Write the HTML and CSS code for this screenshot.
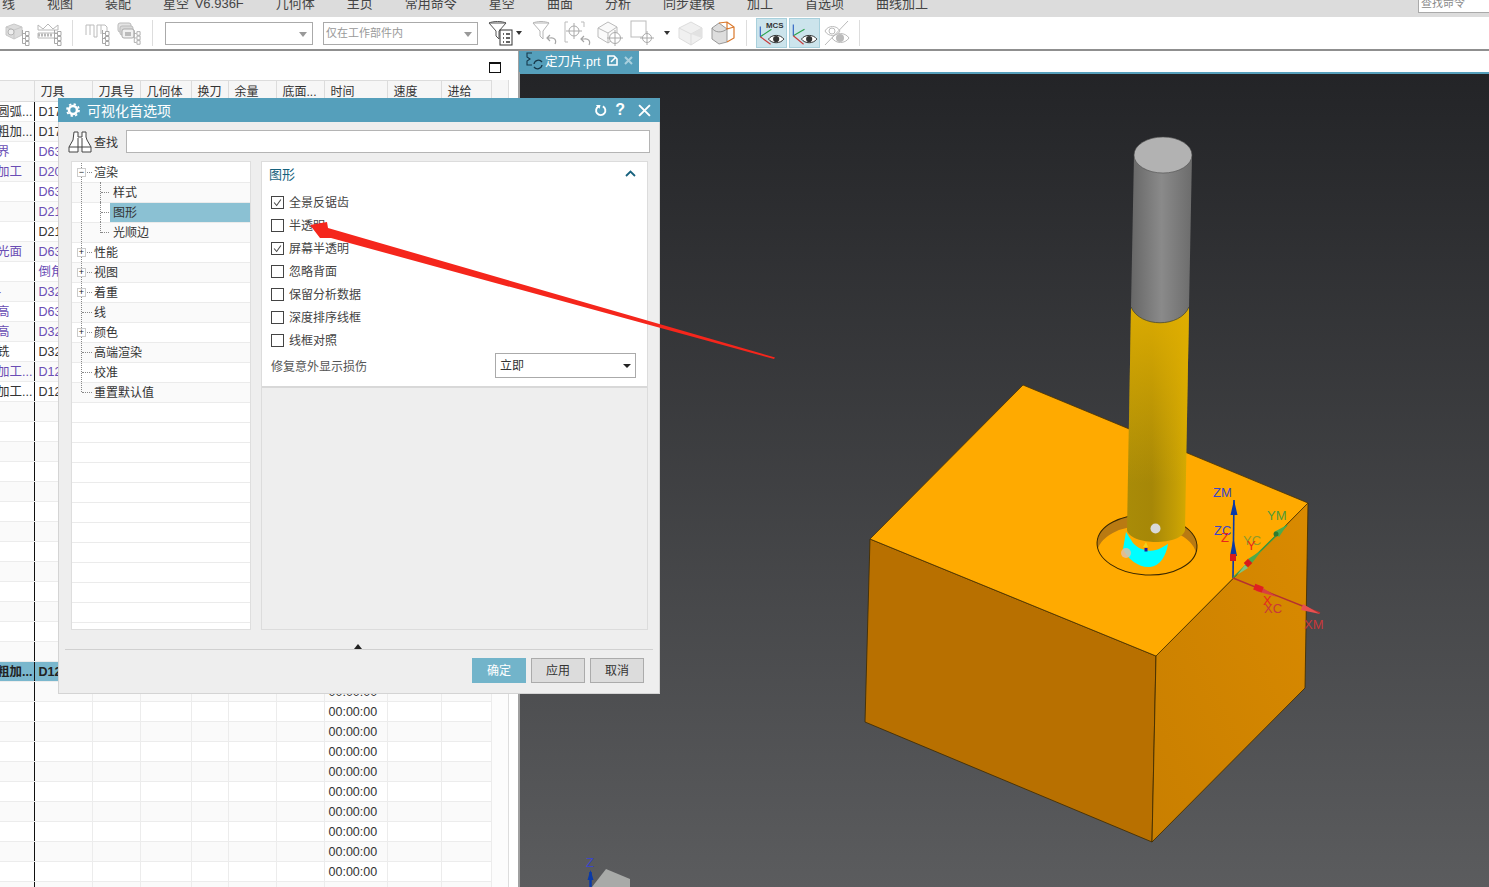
FILE: index.html
```html
<!DOCTYPE html>
<html lang="zh-CN">
<head>
    <meta charset="UTF-8">
    <title>可视化首选项</title>
    <link rel="stylesheet" href="styles.css">
</head>
<body>
    <svg class="defs" width="0" height="0">
        <symbol id="branch" viewBox="0 0 10 16">
            <path d="M2.5 0V13.5M2.5 3.5H5M2.5 8.5H5M2.5 13.5H5" fill="none" stroke="#a8a8a8"/>
            <path d="M5.5 1.5h3.5v4h-3.5zM5.5 6.5h3.5v4h-3.5zM5.5 11.5h3.5v4h-3.5z" fill="#fff" stroke="#a8a8a8"/>
        </symbol>
        <symbol id="eye" viewBox="0 0 24 14">
            <path d="M1 7C6 0 18 0 23 7C18 14 6 14 1 7Z" fill="#fff" stroke="#333" stroke-width="1.4"/>
            <circle cx="12" cy="7" r="4.4" fill="#333"/>
        </symbol>
    </svg>

    <div class="menubar">
        <span>线</span><span>视图</span><span>装配</span><span>星空 V6.936F</span><span>几何体</span><span>主页</span><span>常用命令</span><span>星空</span><span>曲面</span><span>分析</span><span>同步建模</span><span>加工</span><span>首选项</span><span>曲线加工</span>
        <div class="cmd-search">查找命令</div>
    </div>

    <div class="toolbar">
        <svg class="tool" viewBox="0 0 25 26"><path d="M1 7l8-3 8 3v8l-8 4-8-4z" fill="#dcdcdc" stroke="#c8c8c8"/><path d="M1 7l8 3 8-3M9 10v9" fill="none" stroke="#c8c8c8"/><circle cx="6" cy="12" r="3" fill="#eee" stroke="#b5b5b5"/><use href="#branch" x="15" y="10" width="10" height="16"/></svg>
        <svg class="tool" viewBox="0 0 25 26"><path d="M1 5l5 4 5-5 5 5 5-4v5H1zM1 13h20M1 13v5h20v-5" fill="none" stroke="#b8b8b8"/><path d="M1 15h14" stroke="#b8b8b8" stroke-dasharray="2 1" stroke-width="3"/><use href="#branch" x="15" y="10" width="10" height="16"/></svg>
        <i class="sep sep-a"></i>
        <svg class="tool tool-c" viewBox="0 0 25 26"><path d="M1 15V5h4v10M5 5h4v12h3V5h4v9M16 5h4l2 2v8l-3 3" fill="none" stroke="#bcbcbc"/><use href="#branch" x="15" y="10" width="10" height="16"/></svg>
        <svg class="tool tool-d" viewBox="0 0 25 26"><rect x="2" y="3" width="13" height="9" rx="2" fill="#e4e4e4" stroke="#bbb"/><rect x="4" y="6" width="13" height="9" rx="2" fill="#d8d8d8" stroke="#bbb"/><rect x="6" y="9" width="12" height="9" rx="2" fill="#f0f0f0" stroke="#aaa"/><rect x="9" y="12" width="6" height="4" fill="#bbb"/><use href="#branch" x="16" y="10" width="9" height="15"/></svg>
        <i class="sep sep-b"></i>
        <div class="combo combo-a"><i class="caret"></i></div>
        <div class="combo combo-b">仅在工作部件内<i class="caret"></i></div>
        <svg class="tool tool-f" viewBox="0 0 25 26"><path d="M1 3h17l-7 8v8l-3-3v-5z" fill="#fff" stroke="#555"/><path d="M1 3c4-2 13-2 17 0" fill="none" stroke="#555"/><rect x="12" y="10" width="12" height="15" fill="#fff" stroke="#333"/><path d="M15 14h1M15 18h1M15 22h1M18 14h4M18 18h4M18 22h4" stroke="#333" stroke-width="1.4"/></svg>
        <i class="drop drop-a"></i>
        <svg class="tool tool-g" viewBox="0 0 25 26"><path d="M1 3h16l-6 8v8l-3-3v-5z" fill="#fff" stroke="#b5b5b5"/><path d="M1 3c4-2 12-2 16 0" fill="none" stroke="#b5b5b5"/><path d="M23 24c2-4-1-7-5-6l-3 0M18 15l-3 3 3 3" fill="none" stroke="#a5a5a5" stroke-width="1.2"/></svg>
        <svg class="tool tool-h" viewBox="0 0 27 26"><path d="M4 2H1v20h3M17 2h3v5" fill="none" stroke="#bbb"/><circle cx="10" cy="11" r="5" fill="none" stroke="#aaa"/><path d="M10 3v16M2 11h16" stroke="#aaa"/><path d="M25 25c2-4-1-7-5-6l-3 0M20 16l-3 3 3 3" fill="none" stroke="#a5a5a5" stroke-width="1.2"/></svg>
        <svg class="tool tool-i" viewBox="0 0 27 26"><path d="M1 8l10-6 9 5v10l-9 6-10-6z" fill="#fafafa" stroke="#bbb"/><path d="M1 8l10 5 9-6M11 13v10" fill="none" stroke="#bbb"/><circle cx="18" cy="18" r="5.5" fill="#fff" stroke="#aaa"/><path d="M18 10v16M10 18h16" stroke="#aaa"/></svg>
        <svg class="tool tool-j" viewBox="0 0 27 26"><rect x="1" y="1" width="15" height="16" fill="#fff" stroke="#bbb"/><circle cx="17" cy="18" r="4.5" fill="#fff" stroke="#aaa"/><path d="M17 11v14M10 18h14" stroke="#aaa"/></svg>
        <i class="drop drop-b"></i>
        <svg class="tool tool-k" viewBox="0 0 25 26"><path d="M1 8l12-6 11 6v10l-11 7-12-7z" fill="#f0f0f0" stroke="#ddd"/><path d="M1 8l12 6 11-6M13 14v11" fill="none" stroke="#ddd"/><path d="M13 14l11 4v-10z" fill="#e2e2e2"/></svg>
        <svg class="tool tool-l" viewBox="0 0 25 26"><path d="M1 8l7-5 8 6v13l-8 2-7-5z" fill="#ddd" stroke="#999"/><path d="M1 8c3 5 10 5 15 1" fill="none" stroke="#999"/><path d="M8 3l8-1 7 5v11l-7 4M16 2v7l7-2" fill="none" stroke="#d9772a" stroke-width="1.2"/></svg>
        <i class="sep sep-c"></i>
        <div class="view-btn view-mcs">
            <svg viewBox="0 0 30 30"><path d="M3 19L15 11" stroke="#2aa24a" stroke-width="1.2"/><path d="M3 8V19" stroke="#2b5fc2" stroke-width="1.2"/><path d="M3 19L14 27" stroke="#c83a3a" stroke-width="1.2"/><use href="#eye" x="11" y="16" width="18" height="11"/><text x="9" y="10" class="mcs-text">MCS</text></svg>
        </div>
        <div class="view-btn">
            <svg viewBox="0 0 30 30"><path d="M3 18L15 11" stroke="#2aa24a" stroke-width="1.2"/><path d="M3 6V18" stroke="#2b5fc2" stroke-width="1.2"/><path d="M3 18L14 27" stroke="#c83a3a" stroke-width="1.2"/><use href="#eye" x="11" y="16" width="18" height="11"/></svg>
        </div>
        <svg class="tool tool-n" viewBox="0 0 26 30"><path d="M1 13C4 7 13 7 16 13C13 19 4 19 1 13Z" fill="none" stroke="#bbb"/><circle cx="8" cy="13" r="3" fill="none" stroke="#bbb"/><path d="M8 20C12 14 21 14 25 20C21 26 12 26 8 20Z" fill="#fff" stroke="#bbb"/><circle cx="16" cy="20" r="4" fill="#bbb"/><path d="M1 27L24 3" stroke="#bbb"/></svg>
        <i class="sep sep-d"></i>
    </div>

    <div class="workspace">
        <div class="nav-panel">
            <div class="nav-head"><i class="maximize"></i></div>
            <div class="table-wrap">
            <table class="op-table">
                <colgroup><col class="c1"><col class="c2"><col class="c3"><col class="c4"><col class="c5"><col class="c6"><col class="c7"><col class="c8"><col class="c9"><col class="c10"></colgroup>
                <thead><tr><th></th><th>刀具</th><th>刀具号</th><th>几何体</th><th>换刀</th><th>余量</th><th>底面...</th><th>时间</th><th>速度</th><th>进给</th></tr></thead>
                <tbody>
                    <tr><td>圆弧...</td><td>D17</td><td></td><td></td><td></td><td></td><td></td><td></td><td></td><td></td></tr>
                    <tr><td>粗加...</td><td>D17</td><td></td><td></td><td></td><td></td><td></td><td></td><td></td><td></td></tr>
                    <tr class="purple"><td>界</td><td>D63</td><td></td><td></td><td></td><td></td><td></td><td></td><td></td><td></td></tr>
                    <tr class="purple"><td>加工</td><td>D20</td><td></td><td></td><td></td><td></td><td></td><td></td><td></td><td></td></tr>
                    <tr class="purple"><td></td><td>D63</td><td></td><td></td><td></td><td></td><td></td><td></td><td></td><td></td></tr>
                    <tr class="purple"><td></td><td>D21</td><td></td><td></td><td></td><td></td><td></td><td></td><td></td><td></td></tr>
                    <tr><td></td><td>D21</td><td></td><td></td><td></td><td></td><td></td><td></td><td></td><td></td></tr>
                    <tr class="purple"><td>光面</td><td>D63</td><td></td><td></td><td></td><td></td><td></td><td></td><td></td><td></td></tr>
                    <tr class="purple"><td></td><td>倒角</td><td></td><td></td><td></td><td></td><td></td><td></td><td></td><td></td></tr>
                    <tr class="purple"><td>-</td><td>D32</td><td></td><td></td><td></td><td></td><td></td><td></td><td></td><td></td></tr>
                    <tr class="purple"><td>高</td><td>D63</td><td></td><td></td><td></td><td></td><td></td><td></td><td></td><td></td></tr>
                    <tr class="purple"><td>高</td><td>D32</td><td></td><td></td><td></td><td></td><td></td><td></td><td></td><td></td></tr>
                    <tr><td>铣</td><td>D32</td><td></td><td></td><td></td><td></td><td></td><td></td><td></td><td></td></tr>
                    <tr class="purple"><td>加工...</td><td>D12</td><td></td><td></td><td></td><td></td><td></td><td></td><td></td><td></td></tr>
                    <tr><td>加工...</td><td>D12</td><td></td><td></td><td></td><td></td><td></td><td></td><td></td><td></td></tr>
                    <tr><td></td><td></td><td></td><td></td><td></td><td></td><td></td><td></td><td></td><td></td></tr>
                    <tr><td></td><td></td><td></td><td></td><td></td><td></td><td></td><td></td><td></td><td></td></tr>
                    <tr><td></td><td></td><td></td><td></td><td></td><td></td><td></td><td></td><td></td><td></td></tr>
                    <tr><td></td><td></td><td></td><td></td><td></td><td></td><td></td><td></td><td></td><td></td></tr>
                    <tr><td></td><td></td><td></td><td></td><td></td><td></td><td></td><td></td><td></td><td></td></tr>
                    <tr><td></td><td></td><td></td><td></td><td></td><td></td><td></td><td></td><td></td><td></td></tr>
                    <tr><td></td><td></td><td></td><td></td><td></td><td></td><td></td><td></td><td></td><td></td></tr>
                    <tr><td></td><td></td><td></td><td></td><td></td><td></td><td></td><td></td><td></td><td></td></tr>
                    <tr><td></td><td></td><td></td><td></td><td></td><td></td><td></td><td></td><td></td><td></td></tr>
                    <tr><td></td><td></td><td></td><td></td><td></td><td></td><td></td><td></td><td></td><td></td></tr>
                    <tr><td></td><td></td><td></td><td></td><td></td><td></td><td></td><td></td><td></td><td></td></tr>
                    <tr><td></td><td></td><td></td><td></td><td></td><td></td><td></td><td></td><td></td><td></td></tr>
                    <tr><td></td><td></td><td></td><td></td><td></td><td></td><td></td><td></td><td></td><td></td></tr>
                    <tr class="current"><td>粗加...</td><td>D12</td><td></td><td></td><td></td><td></td><td></td><td></td><td></td><td></td></tr>
                    <tr><td></td><td></td><td></td><td></td><td></td><td></td><td></td><td>00:00:00</td><td></td><td></td></tr>
                    <tr><td></td><td></td><td></td><td></td><td></td><td></td><td></td><td>00:00:00</td><td></td><td></td></tr>
                    <tr><td></td><td></td><td></td><td></td><td></td><td></td><td></td><td>00:00:00</td><td></td><td></td></tr>
                    <tr><td></td><td></td><td></td><td></td><td></td><td></td><td></td><td>00:00:00</td><td></td><td></td></tr>
                    <tr><td></td><td></td><td></td><td></td><td></td><td></td><td></td><td>00:00:00</td><td></td><td></td></tr>
                    <tr><td></td><td></td><td></td><td></td><td></td><td></td><td></td><td>00:00:00</td><td></td><td></td></tr>
                    <tr><td></td><td></td><td></td><td></td><td></td><td></td><td></td><td>00:00:00</td><td></td><td></td></tr>
                    <tr><td></td><td></td><td></td><td></td><td></td><td></td><td></td><td>00:00:00</td><td></td><td></td></tr>
                    <tr><td></td><td></td><td></td><td></td><td></td><td></td><td></td><td>00:00:00</td><td></td><td></td></tr>
                    <tr><td></td><td></td><td></td><td></td><td></td><td></td><td></td><td>00:00:00</td><td></td><td></td></tr>
                    <tr><td></td><td></td><td></td><td></td><td></td><td></td><td></td><td></td><td></td><td></td></tr>
                </tbody>
            </table>
            </div>
        </div>

        <div class="graphics">
            <div class="tabstrip">
                <div class="tab">
                    <svg class="tab-icon" viewBox="0 0 18 18"><path d="M7 1H2v4l3 2-3 2v4h5" fill="none" stroke="#17384a" stroke-width="1.1"/><path d="M9 12a4.500 4.500 0 0 1 8-2M17 13a4.500 4.500 0 0 1-8 2" fill="none" stroke="#17384a" stroke-width="1.300"/></svg>
                    <span class="tab-name">定刀片.prt</span>
                    <svg class="tab-pop" viewBox="0 0 11 11"><path d="M1 1h6l3 3v6H1z" fill="none" stroke="#fff" stroke-width="1.6"/><path d="M4 7l5-5" stroke="#fff" stroke-width="1.6"/></svg>
                    <svg class="tab-close" viewBox="0 0 9 9"><path d="M1 1l7 7M8 1l-7 7" stroke="#a9d0de" stroke-width="2"/></svg>
                </div>
            </div>
            <div class="viewport">
                <svg class="scene" viewBox="520 74 969 813" preserveAspectRatio="none">
                    <defs>
                        <linearGradient id="grayBody" x1="0" x2="1" y1="0" y2="0">
                            <stop offset="0" stop-color="#676767"/><stop offset=".5" stop-color="#8a8a8a"/><stop offset="1" stop-color="#6c6c6c"/>
                        </linearGradient>
                        <linearGradient id="yellowBody" x1="0" x2="1" y1="0" y2="0">
                            <stop offset="0" stop-color="#a98b08"/><stop offset=".4" stop-color="#a68707"/><stop offset=".78" stop-color="#c39d05"/><stop offset="1" stop-color="#d8ac00"/>
                        </linearGradient>
                        <linearGradient id="yellowGlow" x1="0" x2="0" y1="0" y2="1">
                            <stop offset="0" stop-color="#e0ae00" stop-opacity=".9"/><stop offset=".75" stop-color="#e0ae00" stop-opacity="0"/>
                        </linearGradient>
                        <linearGradient id="rightFace" x1="1" x2="0" y1="0" y2="1">
                            <stop offset="0" stop-color="#d98a00"/><stop offset="1" stop-color="#c97f00"/>
                        </linearGradient>
                        <clipPath id="holeClip"><ellipse cx="1147" cy="545" rx="50" ry="30" transform="rotate(3 1147 545)"/></clipPath>
                    </defs>

                    <polygon points="870,539 1156,656 1152,842 865,722" fill="#b87000" stroke="#3a2800" stroke-width=".8"/>
                    <polygon points="1156,656 1308,503 1305,688 1152,842" fill="url(#rightFace)" stroke="#3a2800" stroke-width=".8"/>
                    <polygon points="1023,385 1308,503 1156,656 870,539" fill="#ffaa00" stroke="#4a3200" stroke-width=".8"/>

                    <ellipse cx="1147" cy="545" rx="50" ry="30" transform="rotate(3 1147 545)" fill="#b97a12"/>
                    <g clip-path="url(#holeClip)"><ellipse cx="1147" cy="556" rx="50" ry="30" transform="rotate(3 1147 556)" fill="#ffaa00"/></g>
                    <ellipse cx="1147" cy="545" rx="50" ry="30" transform="rotate(3 1147 545)" fill="none" stroke="#3a2800"/>

                    <path d="M1126 532L1123 549C1128 560 1140 568 1150 567C1160 566 1166 556 1168 544L1161 548C1152 553 1140 551 1133 543Z" fill="#0ff"/>

                    <path d="M1131 308L1127 530C1130 546 1182 546 1185 530L1189 308Z" fill="url(#yellowBody)"/>
                    <path d="M1131 308L1127 530C1130 546 1182 546 1185 530L1189 308Z" fill="url(#yellowGlow)"/>
                    <path d="M1134 155L1131 307C1140 328 1180 328 1189 307L1192 155Z" fill="url(#grayBody)"/>
                    <path d="M1131 307C1140 328 1180 328 1189 307" fill="none" stroke="#4b4a30" stroke-width=".8"/>
                    <ellipse cx="1163" cy="155" rx="29" ry="18" fill="#b2b2b2" stroke="#4a4a4a" stroke-width=".6"/>

                    <path d="M1143 547l3-5 2 5z" fill="#f2d21c"/>
                    <rect x="1144.500" y="548" width="3" height="3.500" fill="#1a1aa0"/>
                    <circle cx="1155.500" cy="528.500" r="5" fill="#d9d9d9"/>
                    <circle cx="1126" cy="553" r="5" fill="#ddc0a8" opacity=".85"/>

                    <path d="M1233 578L1234 500" stroke="#0a3aa8" stroke-width="1.600"/>
                    <path d="M1234 500l-3.500 15h7zM1233.500 538l-3.500 18h7z" fill="#0a3aa8"/>
                    <rect x="1230" y="554" width="6" height="7" fill="#d81a1a"/>
                    <path d="M1233 578L1287 525" stroke="#3f9a3f" stroke-width="1.600"/>
                    <path d="M1287 525l-13 7 5 5z" fill="#4cab4c"/>
                    <circle cx="1276" cy="534" r="2.500" fill="#2f7a2f"/>
                    <path d="M1262 550l-14 9 4 4z" fill="#4cab4c"/>
                    <path d="M1237 575l8-10 3 3z" fill="#7fc47f"/>
                    <rect x="1245" y="560" width="6" height="6" fill="#d81a1a" transform="rotate(-45 1248 563)"/>
                    <path d="M1233 578L1320 613" stroke="#b53030" stroke-width="1.400"/>
                    <path d="M1320 614l-17-10-2 6z" fill="#e85050"/>
                    <path d="M1277 597l-19-12-2 6z" fill="#d84040"/>
                    <rect x="1254" y="585" width="9" height="6" fill="#e02020" transform="rotate(20 1258 588)"/>

                    <text x="1213" y="497" class="axis axis-z">ZM</text>
                    <text x="1214" y="535" class="axis axis-z">ZC</text>
                    <text x="1221" y="542" class="axis axis-r">Z</text>
                    <text x="1267" y="520" class="axis axis-g">YM</text>
                    <text x="1243" y="545" class="axis axis-y">YC</text>
                    <text x="1247" y="550" class="axis axis-r">Y</text>
                    <text x="1264" y="613" class="axis axis-x">XC</text>
                    <text x="1263" y="605" class="axis axis-r">X</text>
                    <text x="1304" y="629" class="axis axis-x">XM</text>

                    <path d="M590.500 887V872" stroke="#0a3aa8" stroke-width="2.500"/>
                    <path d="M587.500 880l3-10 3 10z" fill="#0a3aa8"/>
                    <text x="586" y="867" class="axis axis-z">Z</text>
                    <path d="M592 887L606 869L630 879V887Z" fill="#a8aaa8"/>
                </svg>
            </div>
        </div>
    </div>

    <div class="dialog">
        <div class="dialog-title">
            <svg class="gear" viewBox="0 0 14 14"><circle cx="7" cy="7" r="4" fill="none" stroke="#fff" stroke-width="2.600"/><circle cx="7" cy="7" r="6" fill="none" stroke="#fff" stroke-width="1.800" stroke-dasharray="2.300 2.400"/></svg>
            <span class="dialog-name">可视化首选项</span>
            <svg class="title-btn" viewBox="0 0 14 14"><path d="M5 2.500A5 5 0 1 0 9.500 2.500" fill="none" stroke="#fff" stroke-width="2"/><path d="M2 1l5 0-1 4z" fill="#fff"/></svg>
            <span class="title-help">?</span>
            <svg class="title-btn" viewBox="0 0 12 12"><path d="M1 1l10 10M11 1L1 11" stroke="#fff" stroke-width="1.800"/></svg>
        </div>

        <div class="find-row">
            <svg class="binoculars" viewBox="0 0 24 22"><path d="M6 1h4v5h4V1h4v5l1 3 4 7v5h-9v-5h-4v5H1v-5l4-7z" fill="#fff" stroke="#444"/><path d="M1 16h9M14 16h9M10 7v9M14 7v9" fill="none" stroke="#444"/></svg>
            <span>查找</span>
            <div class="find-input"></div>
        </div>

        <div class="dialog-main">
            <div class="tree">
                <div class="node"><i class="toggle">−</i>渲染</div>
                <div class="node sub"><span>样式</span></div>
                <div class="node sub selected"><span>图形</span></div>
                <div class="node sub sub-last"><span>光顺边</span></div>
                <div class="node"><i class="toggle">+</i>性能</div>
                <div class="node"><i class="toggle">+</i>视图</div>
                <div class="node"><i class="toggle">+</i>着重</div>
                <div class="node">线</div>
                <div class="node"><i class="toggle">+</i>颜色</div>
                <div class="node">高端渲染</div>
                <div class="node">校准</div>
                <div class="node node-last">重置默认值</div>
            </div>

            <div class="pane">
                <div class="section">
                    <div class="section-head">
                        <span>图形</span>
                        <svg class="chevron" viewBox="0 0 11 7"><path d="M1 6l4.500-4.500L10 6" fill="none" stroke="#17627e" stroke-width="1.800"/></svg>
                    </div>
                    <div class="check-row"><i class="box"><svg viewBox="0 0 13 13"><path d="M2.500 6.500l3 3.500 5-7" fill="none" stroke="#444" stroke-width="1.200"/></svg></i>全景反锯齿</div>
                    <div class="check-row"><i class="box"></i>半透明</div>
                    <div class="check-row"><i class="box"><svg viewBox="0 0 13 13"><path d="M2.500 6.500l3 3.500 5-7" fill="none" stroke="#444" stroke-width="1.200"/></svg></i>屏幕半透明</div>
                    <div class="check-row"><i class="box"></i>忽略背面</div>
                    <div class="check-row"><i class="box"></i>保留分析数据</div>
                    <div class="check-row"><i class="box"></i>深度排序线框</div>
                    <div class="check-row"><i class="box"></i>线框对照</div>
                    <div class="select-row">
                        <span>修复意外显示损伤</span>
                        <div class="select">立即<i class="select-caret"></i></div>
                    </div>
                </div>
            </div>
        </div>

        <div class="collapse-row"><i class="collapse-up"></i></div>

        <div class="dialog-foot">
            <div class="btn btn-ok">确定</div>
            <div class="btn">应用</div>
            <div class="btn">取消</div>
        </div>
    </div>

    <svg class="annotation" viewBox="0 0 1489 887">
        <polygon points="310,225 327,222 328,228 775,357.500 774,359 331,238 320,238" fill="#f5261c"/>
    </svg>
</body>
</html>
```

FILE: styles.css
```css
* {
    box-sizing: border-box;
}
html, body {
    margin: 0;
    height: 100%;
}
body {
    position: relative;
    width: 1489px;
    height: 887px;
    overflow: hidden;
    font-family: "Liberation Sans", "Noto Sans CJK SC", sans-serif;
    font-size: 12px;
    color: #333;
    background-color: #fff;
    display: flex;
    flex-direction: column;
}
i {
    font-style: normal;
}
.defs {
    position: absolute;
}

/* menu bar */
.menubar {
    flex: none;
    height: 17px;
    background-color: #dcdcdc;
    display: flex;
    gap: 32px;
    padding: 0 0 0 2px;
    font-size: 13px;
    line-height: 13px;
    word-spacing: 2px;
    color: #444;
    overflow: hidden;
    align-items: flex-end;
}
.menubar span {
    margin-bottom: 7px;
    white-space: nowrap;
}
.cmd-search {
    margin-left: auto;
    align-self: flex-start;
    width: 71px;
    height: 13px;
    margin-right: 0;
    background-color: #fff;
    border-left: 1px solid #aaa;
    border-bottom: 1px solid #aaa;
    padding-left: 2px;
    font-size: 11px;
    line-height: 6px;
    color: #888;
}

/* toolbar */
.toolbar {
    flex: none;
    height: 34px;
    background-color: #fff;
    border-bottom: 2px solid #8f8f8f;
    display: flex;
    align-items: center;
    padding-left: 5px;
}
.tool {
    flex: none;
    width: 25px;
    height: 26px;
    margin-right: 7px;
}
.sep {
    flex: none;
    width: 1px;
    height: 26px;
    background-color: #ddd;
}
.sep-a { margin: 0 12px 0 3px; }
.tool-c { margin-right: 6px; }
.tool-d { margin-right: 0; }
.sep-b { margin: 0 12px 0 11px; }
.combo {
    flex: none;
    position: relative;
    height: 23px;
    border: 1px solid #aaa;
    background-color: #fff;
    font-size: 11px;
    line-height: 21px;
    color: #999;
    padding-left: 2px;
}
.combo-a { width: 148px; margin-right: 10px; }
.combo-b { width: 155px; margin-right: 10px; }
.caret {
    position: absolute;
    right: 5px;
    top: 9px;
    border: 4px solid transparent;
    border-top: 5px solid #999;
    border-bottom: 0;
}
.tool-f { margin-right: 3px; }
.drop {
    flex: none;
    border: 3px solid transparent;
    border-top: 4px solid #333;
    border-bottom: 0;
}
.drop-a { margin-right: 10px; }
.tool-g { margin-right: 7px; }
.tool-h { width: 27px; margin-right: 6px; }
.tool-i { width: 27px; margin-right: 6px; }
.tool-j { width: 27px; margin-right: 7px; }
.drop-b { margin-right: 8px; }
.tool-k { margin-right: 8px; }
.tool-l { margin-right: 10px; }
.sep-c { margin-right: 9px; }
.view-btn {
    flex: none;
    width: 31px;
    height: 30px;
    margin-right: 2px;
    background-color: #cce4ec;
    border: 1px solid #a8d0dc;
}
.view-btn svg {
    display: block;
    width: 29px;
    height: 28px;
}
.mcs-text {
    font-family: "Liberation Sans", sans-serif;
    font-size: 8.500px;
    font-weight: bold;
    fill: #333;
}
.tool-n { width: 26px; height: 30px; margin: 0 9px 0 2px; }

/* main area */
.workspace {
    flex: 1;
    display: flex;
    min-height: 0;
}
.nav-panel {
    flex: none;
    width: 520px;
    padding-right: 1px;
    border-right: 2px solid #a0a0a0;
    overflow: hidden;
    background-color: #fff;
}
.nav-head {
    height: 29px;
    display: flex;
    justify-content: flex-end;
    padding: 11px 16px 0 0;
}
.maximize {
    width: 12px;
    height: 11px;
    border: 1px solid #111;
    border-top-width: 2px;
}
.table-wrap {
    width: 509px;
    border-right: 1px solid #ddd;
    background: linear-gradient(to bottom, #f6f6f6 21px, #fcfcfc 21px);
}
.op-table {
    width: 491px;
    table-layout: fixed;
    border-collapse: collapse;
    line-height: 18px;
}
.c1 { width: 34px; }
.c2 { width: 58px; }
.c3 { width: 48px; }
.c4 { width: 51px; }
.c5 { width: 37px; }
.c6 { width: 48px; }
.c7 { width: 48px; }
.c8 { width: 63px; }
.c9 { width: 54px; }
.c10 { width: 50px; }
.op-table th {
    height: 21px;
    padding: 2px 0 0 6px;
    font-weight: normal;
    text-align: left;
    background-color: #f6f6f6;
    border: 1px solid #dcdcdc;
    border-left: 0;
    white-space: nowrap;
    overflow: hidden;
}
.op-table td {
    height: 20px;
    padding: 0 0 0 4px;
    font-size: 12.500px;
    line-height: 17px;
    vertical-align: bottom;
    background-color: #fff;
    border-right: 1px solid #ececec;
    border-bottom: 1px solid #ececec;
    white-space: nowrap;
    overflow: hidden;
}
.op-table td:first-child {
    padding-left: 0;
    text-indent: -3px;
    border-right: 1px solid #111;
}
.op-table tbody tr:nth-child(even) td {
    background-color: #fafafa;
}
.op-table tr.purple {
    color: #6a4db4;
}
.op-table tr.current {
    font-weight: bold;
    color: #222;
}
.op-table tbody tr.current td {
    background-color: #7ab7cd;
}

/* graphics window */
.graphics {
    flex: 1;
    display: flex;
    flex-direction: column;
    min-width: 0;
}
.tabstrip {
    flex: none;
    height: 23px;
    border-bottom: 2px solid #559fbb;
    background-color: #fff;
}
.tab {
    width: 120px;
    height: 21px;
    margin-left: -1px;
    background-color: #559fbb;
    color: #fff;
    display: flex;
    align-items: center;
    padding: 0 0 2px 6px;
}
.tab-icon {
    width: 18px;
    height: 18px;
}
.tab-name {
    margin-left: 2px;
    font-size: 12.500px;
}
.tab-pop {
    width: 11px;
    height: 11px;
    margin-left: 6px;
}
.tab-close {
    width: 9px;
    height: 9px;
    margin-left: 6px;
}
.viewport {
    flex: 1;
    min-height: 0;
    background: linear-gradient(to bottom, #232427, #5b5c5e);
}
.scene {
    display: block;
    width: 969px;
    height: 813px;
}
.axis {
    font-family: "Liberation Sans", sans-serif;
    font-size: 13px;
}
.axis-z { fill: #3b46c8; }
.axis-r { fill: #e8261c; }
.axis-g { fill: #4f9a3a; }
.axis-y { fill: #8f9a2a; }
.axis-x { fill: #c8383a; }

/* dialog */
.dialog {
    position: absolute;
    left: 58px;
    top: 98px;
    width: 602px;
    height: 596px;
    background-color: #eeeeee;
    border: 1px solid #d4d4d4;
    border-top: 0;
}
.dialog-title {
    height: 24px;
    margin: 0 -1px;
    background-color: #559fbb;
    color: #fff;
    display: flex;
    align-items: center;
    padding: 0 9px 0 8px;
}
.gear {
    width: 14px;
    height: 14px;
}
.dialog-name {
    margin-left: 7px;
    font-size: 14px;
    flex: 1;
}
.title-btn {
    width: 13px;
    height: 13px;
}
.title-help {
    margin: 0 13px 0 8px;
    font: bold 16px "Liberation Sans", sans-serif;
}
.find-row {
    display: flex;
    align-items: center;
    height: 23px;
    margin: 8px 9px 8px 9px;
}
.binoculars {
    width: 24px;
    height: 22px;
    margin-right: 2px;
}
.find-input {
    flex: 1;
    height: 23px;
    margin-left: 8px;
    background-color: #fff;
    border: 1px solid #b4b4b4;
}
.dialog-main {
    display: flex;
    height: 469px;
    margin: 0 11px 0 12px;
    gap: 10px;
}
.tree {
    flex: none;
    width: 180px;
    padding-top: 1px;
    border: 1px solid #dedede;
    background: repeating-linear-gradient(to bottom, #fff 0, #fff 19px, #ebebeb 19px, #ebebeb 20px) 0 1px;
}
.node {
    position: relative;
    height: 20px;
    line-height: 20px;
    padding-left: 22px;
    background-color: #fff;
    border-bottom: 1px solid #ebebeb;
}
.node:nth-child(even) {
    background-color: #fafafa;
}
.node::before {
    content: "";
    position: absolute;
    left: 9px;
    top: 0;
    bottom: 0;
    border-left: 1px dotted #888;
}
.node::after {
    content: "";
    position: absolute;
    left: 10px;
    top: 9px;
    width: 10px;
    border-top: 1px dotted #888;
}
.node-last::before {
    bottom: 10px;
}
.toggle {
    position: absolute;
    z-index: 1;
    left: 5px;
    top: 5px;
    width: 9px;
    height: 9px;
    background-color: #fff;
    border: 1px solid #ccc;
    font: 9px/7px "Liberation Sans", sans-serif;
    text-align: center;
    color: #222;
}
.sub {
    padding-left: 0;
}
.sub span {
    position: relative;
    display: block;
    height: 19px;
    margin-left: 38px;
    padding-left: 3px;
}
.sub span::before {
    content: "";
    position: absolute;
    left: -10px;
    top: -1px;
    bottom: 0;
    border-left: 1px dotted #888;
}
.sub span::after {
    content: "";
    position: absolute;
    left: -9px;
    top: 9px;
    width: 8px;
    border-top: 1px dotted #888;
}
.sub-last span::before {
    bottom: 9px;
}
.sub::after {
    display: none;
}
.selected span {
    background-color: #8bc1d3;
}
.pane {
    flex: none;
    width: 387px;
    border: 1px solid #dcdcdc;
    background-color: #eeeeee;
}
.section {
    height: 226px;
    background-color: #fff;
    border-bottom: 2px solid #d8d8d8;
    padding: 0 11px 0 8px;
}
.section-head {
    height: 28px;
    margin-left: -1px;
    display: flex;
    align-items: center;
    justify-content: space-between;
    font-size: 13px;
    color: #17627e;
    padding: 0 0 5px 0;
}
.chevron {
    width: 11px;
    height: 7px;
}
.check-row {
    height: 23px;
    display: flex;
    align-items: center;
    color: #444;
}
.box {
    flex: none;
    width: 13px;
    height: 13px;
    margin: 1px 5px 0 1px;
    border: 1px solid #444;
    background-color: #fff;
}
.box svg {
    display: block;
    width: 11px;
    height: 11px;
}
.select-row {
    display: flex;
    align-items: center;
    justify-content: space-between;
    margin-top: 2px;
    padding-left: 1px;
    height: 25px;
    color: #555;
}
.select {
    position: relative;
    width: 141px;
    height: 25px;
    border: 1px solid #aaa;
    padding-left: 4px;
    line-height: 24px;
    color: #333;
}
.select-caret {
    position: absolute;
    right: 4px;
    top: 10px;
    border: 4px solid transparent;
    border-top: 4px solid #222;
    border-bottom: 0;
}
.collapse-row {
    height: 20px;
    margin: 0 6px;
    border-bottom: 1px solid #d0d0d0;
    display: flex;
    justify-content: center;
    padding: 10px 2px 0 0;
}
.collapse-up {
    margin-right: 0;
    border: 4px solid transparent;
    border-bottom: 5px solid #222;
    border-top: 0;
}
.dialog-foot {
    display: flex;
    justify-content: flex-end;
    gap: 5px;
    padding: 8px 15px 0 0;
}
.btn {
    width: 54px;
    height: 25px;
    background-color: #dcdcdc;
    border: 1px solid #ababab;
    text-align: center;
    line-height: 25px;
    color: #333;
}
.btn-ok {
    background-color: #72b4ca;
    border-color: #72b4ca;
    color: #fff;
}

/* red arrow drawn on the screenshot */
.annotation {
    position: absolute;
    left: 0;
    top: 0;
    width: 1489px;
    height: 887px;
    pointer-events: none;
}
```
